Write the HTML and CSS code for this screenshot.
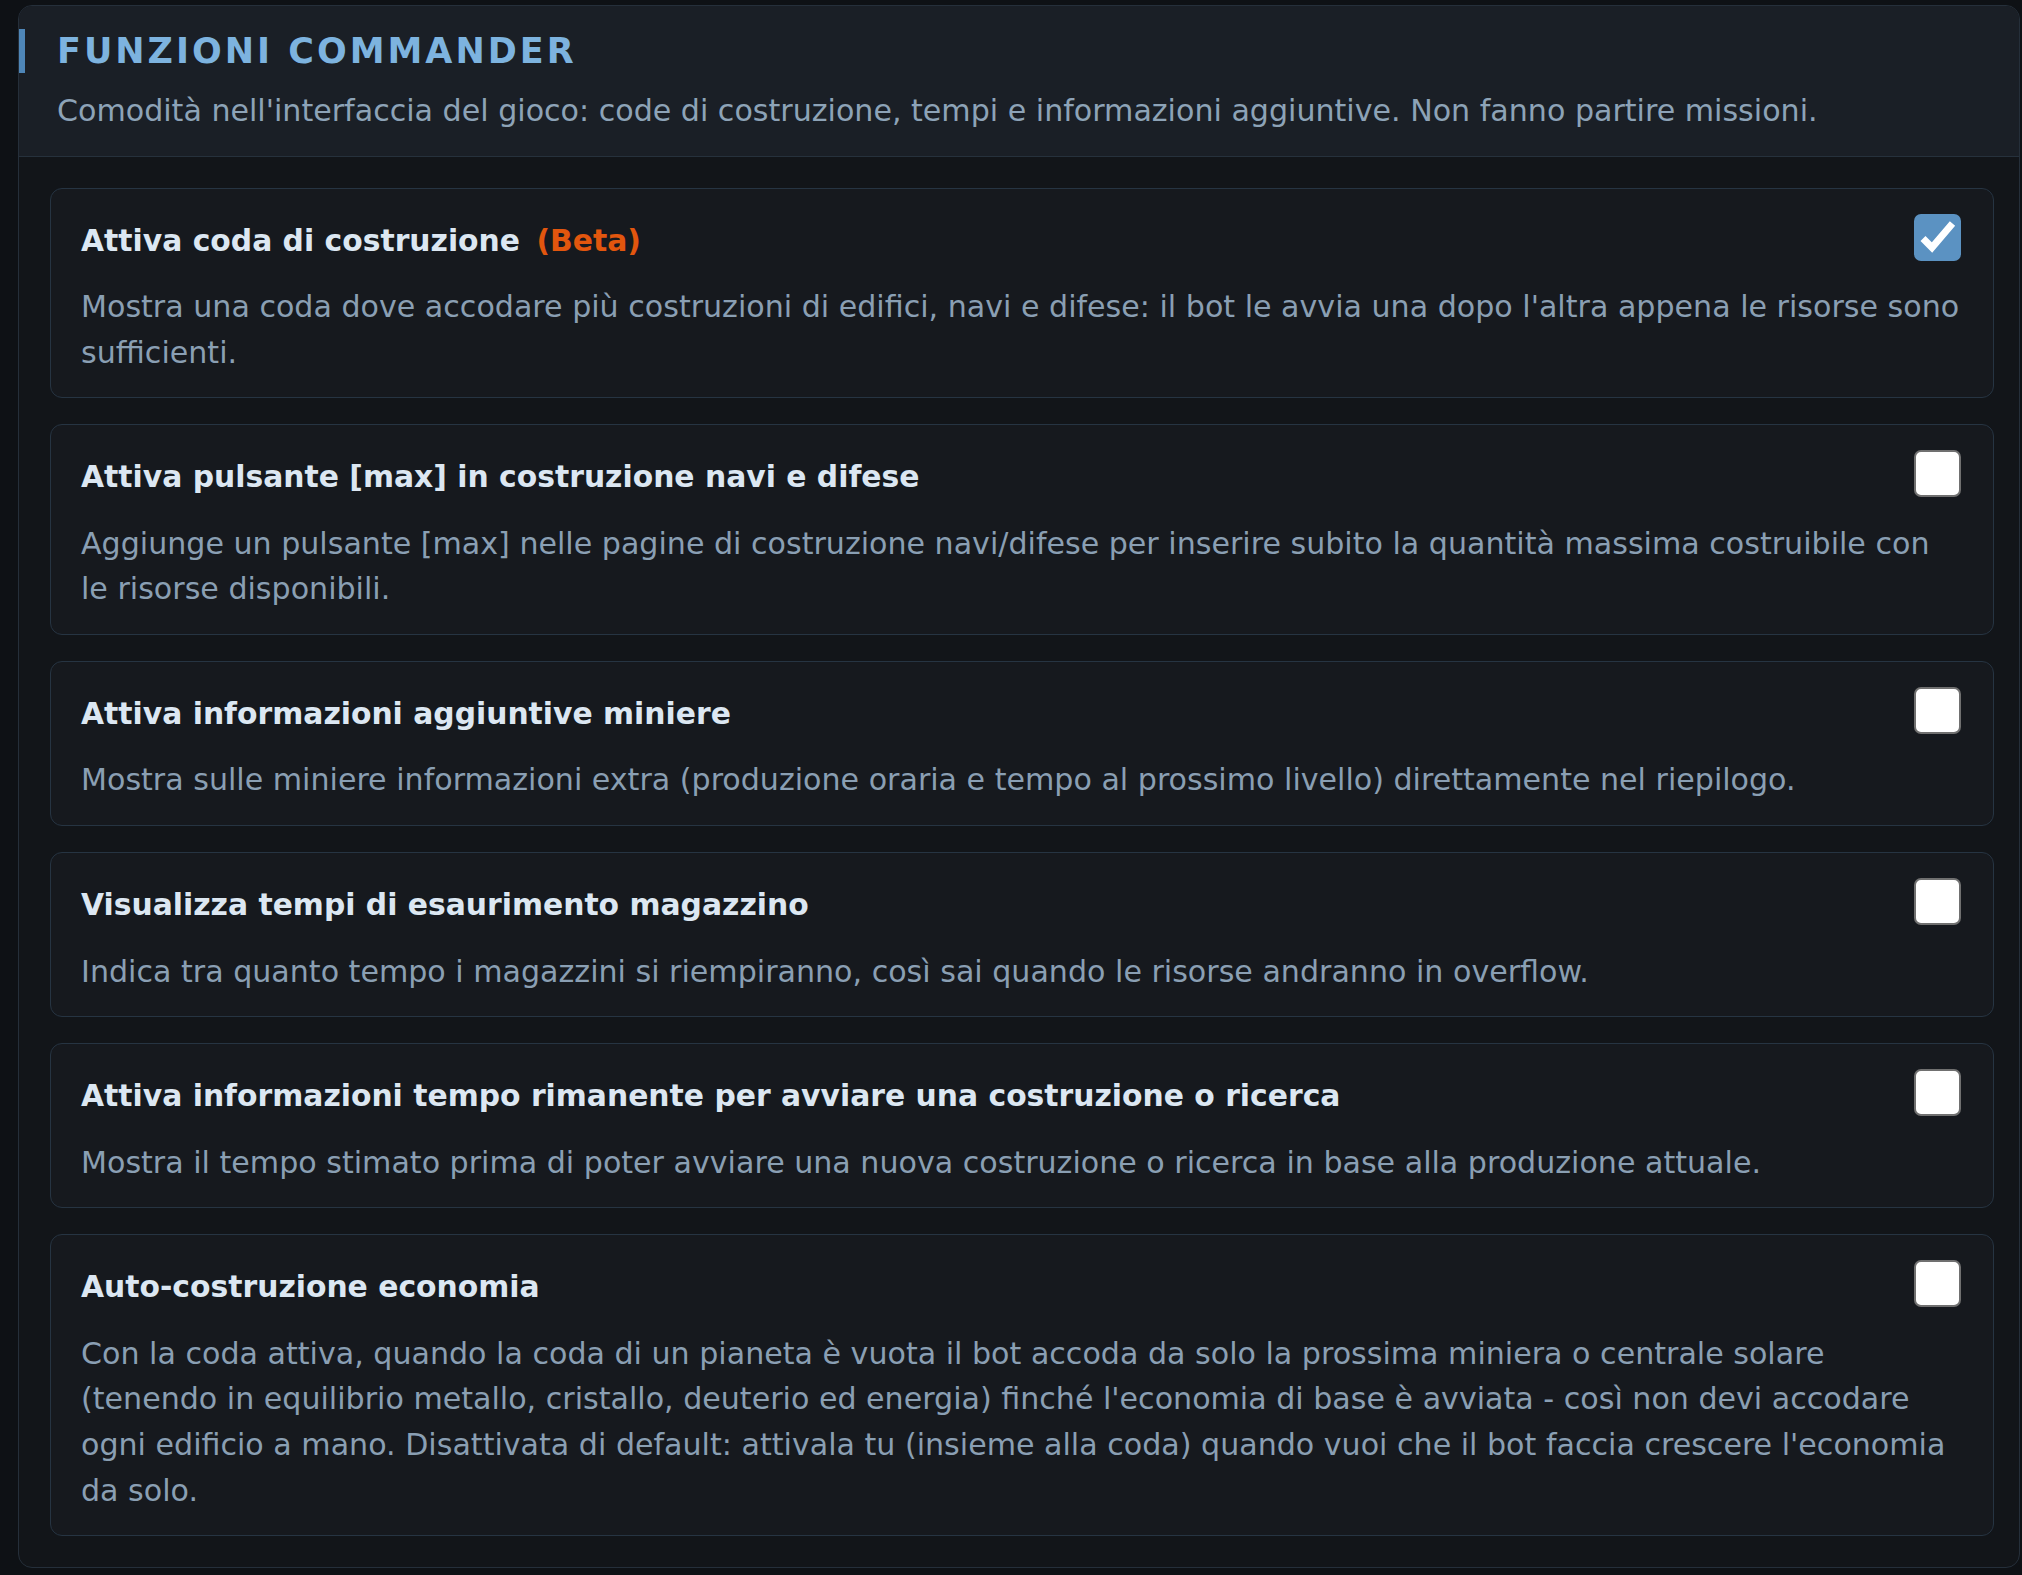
FILE: index.html
```html
<!DOCTYPE html>
<html lang="it">
<head>
<meta charset="utf-8">
<title>Funzioni Commander</title>
<link rel="stylesheet" href="styles.css">
</head>
<body>
<section class="panel">
  <header class="panel-head">
    <h2 class="panel-title">FUNZIONI COMMANDER</h2>
    <p class="panel-sub">Comodità nell'interfaccia del gioco: code di costruzione, tempi e informazioni aggiuntive. Non fanno partire missioni.</p>
  </header>
  <div class="panel-body">
    <div class="option">
      <div class="option-head">
        <span class="option-title">Attiva coda di costruzione <span class="beta">(Beta)</span></span>
        <span class="check on"><svg viewBox="0 0 47 47" width="47" height="47"><path d="M9 24.5 L18 33.5 L38.5 9.5" fill="none" stroke="#ffffff" stroke-width="7"/></svg></span>
      </div>
      <p class="option-desc">Mostra una coda dove accodare più costruzioni di edifici, navi e difese: il bot le avvia una dopo l'altra appena le risorse sono sufficienti.</p>
    </div>
    <div class="option">
      <div class="option-head">
        <span class="option-title">Attiva pulsante [max] in costruzione navi e difese</span>
        <span class="check off"></span>
      </div>
      <p class="option-desc">Aggiunge un pulsante [max] nelle pagine di costruzione navi/difese per inserire subito la quantità massima costruibile con le risorse disponibili.</p>
    </div>
    <div class="option">
      <div class="option-head">
        <span class="option-title">Attiva informazioni aggiuntive miniere</span>
        <span class="check off"></span>
      </div>
      <p class="option-desc">Mostra sulle miniere informazioni extra (produzione oraria e tempo al prossimo livello) direttamente nel riepilogo.</p>
    </div>
    <div class="option">
      <div class="option-head">
        <span class="option-title">Visualizza tempi di esaurimento magazzino</span>
        <span class="check off"></span>
      </div>
      <p class="option-desc">Indica tra quanto tempo i magazzini si riempiranno, così sai quando le risorse andranno in overflow.</p>
    </div>
    <div class="option">
      <div class="option-head">
        <span class="option-title">Attiva informazioni tempo rimanente per avviare una costruzione o ricerca</span>
        <span class="check off"></span>
      </div>
      <p class="option-desc">Mostra il tempo stimato prima di poter avviare una nuova costruzione o ricerca in base alla produzione attuale.</p>
    </div>
    <div class="option">
      <div class="option-head">
        <span class="option-title">Auto-costruzione economia</span>
        <span class="check off"></span>
      </div>
      <p class="option-desc">Con la coda attiva, quando la coda di un pianeta è vuota il bot accoda da solo la prossima miniera o centrale solare (tenendo in equilibrio metallo, cristallo, deuterio ed energia) finché l'economia di base è avviata - così non devi accodare ogni edificio a mano. Disattivata di default: attivala tu (insieme alla coda) quando vuoi che il bot faccia crescere l'economia da solo.</p>
    </div>
  </div>
</section>
</body>
</html>
```
FILE: styles.css
```css
html, body {
  margin: 0;
  padding: 0;
  background: #0e1115;
}
body {
  font-family: "DejaVu Sans", Verdana, sans-serif;
  width: 2022px;
  height: 1575px;
  overflow: hidden;
}
.panel {
  margin: 5px 2px 0 18px;
  border: 1px solid #252f3a;
  border-radius: 14px;
  background: #121519;
  overflow: hidden;
}
.panel-head {
  background: #1a1f26;
  border-bottom: 1px solid #26313c;
  padding: 23px 24px 22px 38px;
}
.panel-title {
  position: relative;
  margin: 0;
  font-size: 35px;
  line-height: 44px;
  font-weight: bold;
  letter-spacing: 3px;
  color: #7db3df;
}
.panel-title::before {
  content: "";
  position: absolute;
  left: -38px;
  top: 0;
  bottom: 0;
  width: 6px;
  background: #4e86b8;
}
.panel-sub {
  margin: 15px 0 0;
  font-size: 30.1px;
  line-height: 45.6px;
  color: #8da3b7;
}
.panel-body {
  padding: 31px 25px 31px 31px;
  display: flex;
  flex-direction: column;
  gap: 26px;
}
.option {
  background: #16191e;
  border: 1px solid #263442;
  border-radius: 12px;
  padding: 25px 32px 22px 30px;
}
.option-head {
  display: flex;
  justify-content: space-between;
  align-items: flex-start;
}
.option-title {
  margin-top: 9px;
  font-size: 29.8px;
  font-weight: bold;
  color: #dce7f2;
}
.beta {
  margin-left: 6px;
  color: #e2560e;
}
.check {
  flex: none;
  width: 47px;
  height: 47px;
  box-sizing: border-box;
  border-radius: 7px;
}
.check svg {
  display: block;
}
.check.on {
  background: #5b92c2;
}
.check.off {
  background: #ffffff;
  border: 2.5px solid #707070;
}
.option-desc {
  margin: 23.5px 0 0;
  font-size: 30.1px;
  line-height: 45.6px;
  color: #8a9fb3;
}
```
